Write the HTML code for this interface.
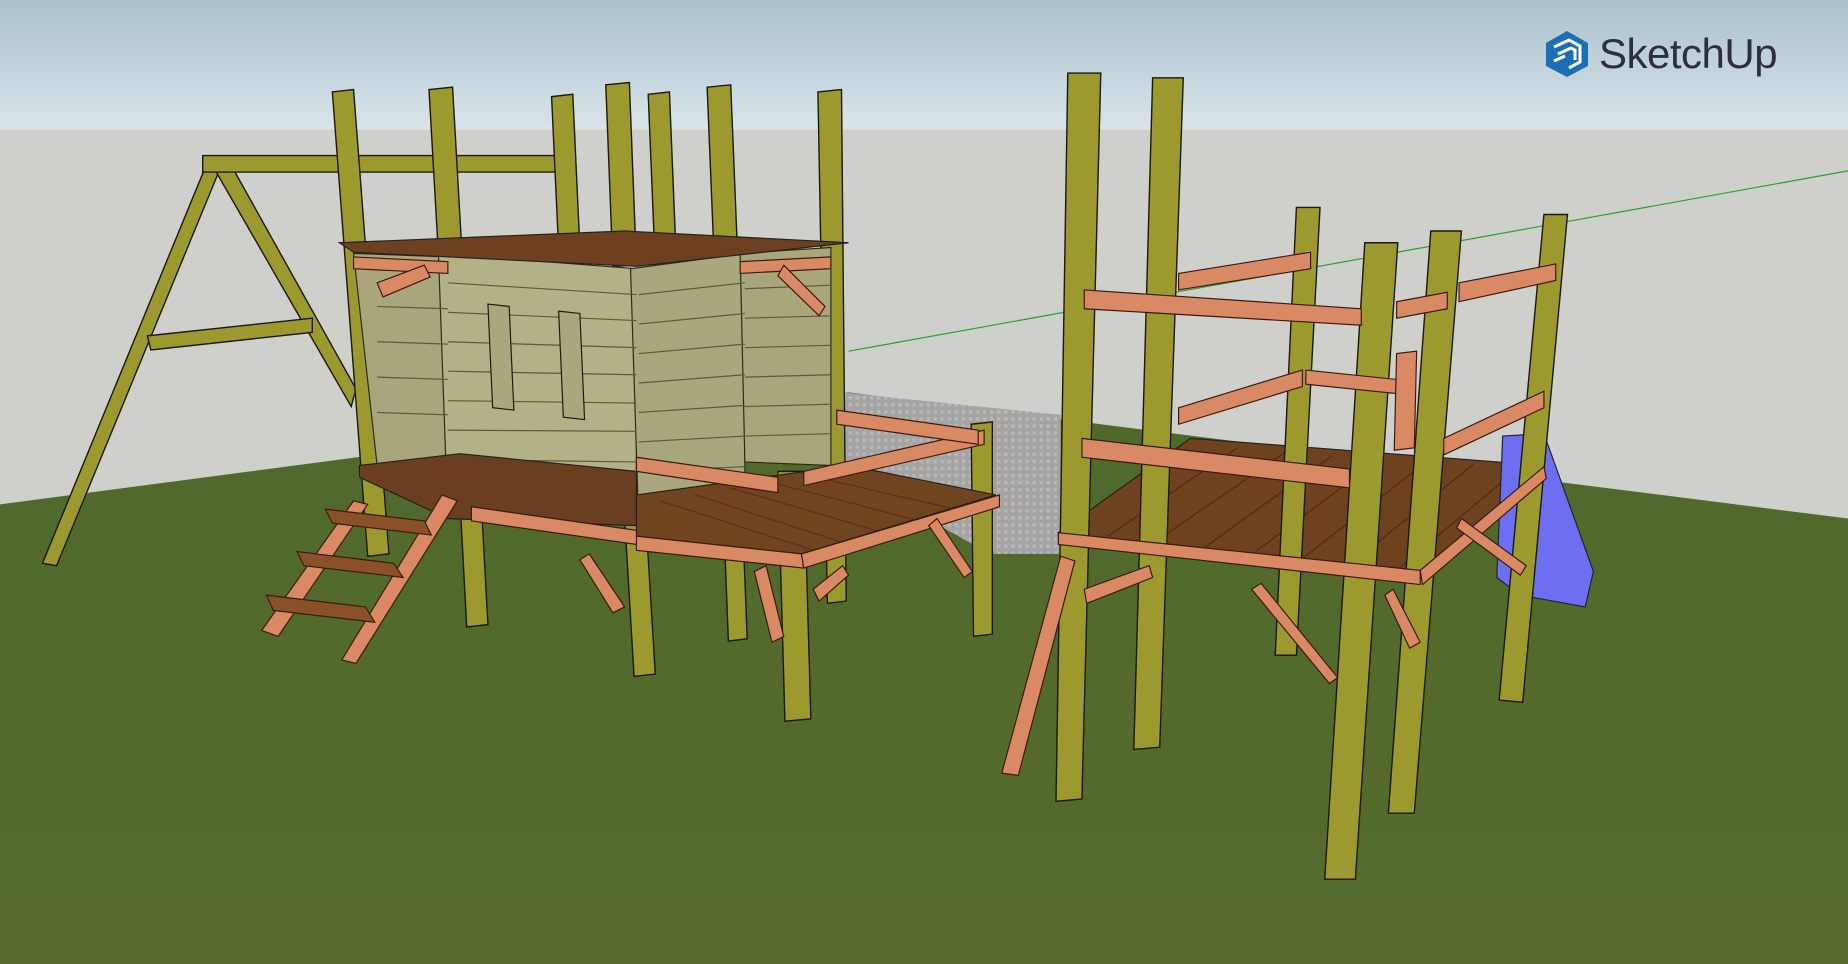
<!DOCTYPE html>
<html><head><meta charset="utf-8"><style>
html,body{margin:0;padding:0;width:1848px;height:964px;overflow:hidden;background:#5a6e2e}
svg{display:block}
.logo{position:absolute;left:1545px;top:30px;display:flex;align-items:center;gap:10px;font-family:"Liberation Sans",sans-serif;font-size:42px;color:#2f2f3c;letter-spacing:-0.5px}
</style></head><body>
<svg width="1848" height="964" viewBox="0 0 1568 818" preserveAspectRatio="none">
<defs>
<linearGradient id="sky" x1="0" y1="0" x2="0" y2="1"><stop offset="0" stop-color="#a9c1cd"/><stop offset="1" stop-color="#dbe5ea"/></linearGradient>
<linearGradient id="gr" x1="0" y1="0" x2="0" y2="1"><stop offset="0" stop-color="#50692b"/><stop offset="1" stop-color="#566a2e"/></linearGradient>
<pattern id="pav" width="6" height="6" patternUnits="userSpaceOnUse"><rect width="6" height="6" fill="#a6a3a3"/><rect width="3" height="3" fill="#b8b6b6"/></pattern>
</defs>
<rect width="1568" height="112" fill="url(#sky)"/>
<rect y="110" width="1568" height="340" fill="#cfcfcb"/>
<polygon points="0,428 720,333 1568,440 1568,818 0,818" fill="url(#gr)"/>
<polygon points="715,333 900,352 900,470 840,470 715,400" fill="url(#pav)"/>
<line x1="720" y1="298" x2="1568" y2="145" stroke="#2ca02c" stroke-width="1"/>
<g stroke="#1a1a10" stroke-width="1.2" fill="#9c9a2e">
<!-- swing A frame -->
<polygon points="36,478 175,140 188,140 48,480"/>
<polygon points="180,140 196,140 302,330 298,345"/>
<polygon points="172,132 480,132 480,146 172,146"/>
<polygon points="125,285 265,270 265,282 128,297"/>
<!-- posts left structure -->
<polygon points="282,78 300,76 330,470 312,472"/>
<polygon points="364,76 384,74 392,215 372,216"/>
<polygon points="468,82 486,80 492,210 474,211"/>
<polygon points="514,72 534,70 540,225 520,226"/>
<polygon points="550,80 568,78 574,225 556,226"/>
<polygon points="600,74 620,72 626,220 606,221"/>
<polygon points="694,78 714,76 718,510 702,512"/>
<polygon points="390,420 408,420 414,530 396,532"/>
<polygon points="530,440 548,440 556,572 538,574"/>
<polygon points="614,440 630,440 634,542 618,544"/>
<polygon points="660,400 682,400 688,610 666,612"/>
<polygon points="824,360 842,358 842,538 826,540"/>
</g>
<!-- house -->
<g stroke="#2a2a1a" stroke-width="1">
<polygon points="300,215 380,218 380,395 320,395" fill="#a8a67a"/>
<polygon points="372,215 540,228 540,446 380,440" fill="#b3b186"/>
<polygon points="535,228 632,215 632,440 542,446" fill="#a9a77c"/>
<polygon points="628,215 705,210 705,395 632,392" fill="#a8a67a"/>
</g>
<g stroke="#5a5a40" stroke-width="1">
<line x1="380" y1="240" x2="540" y2="250"/><line x1="380" y1="265" x2="540" y2="272"/><line x1="380" y1="290" x2="540" y2="295"/><line x1="380" y1="315" x2="540" y2="318"/><line x1="380" y1="340" x2="540" y2="342"/><line x1="380" y1="365" x2="540" y2="366"/><line x1="380" y1="390" x2="540" y2="392"/><line x1="380" y1="415" x2="540" y2="418"/>
<line x1="542" y1="250" x2="632" y2="240"/><line x1="542" y1="275" x2="632" y2="266"/><line x1="542" y1="300" x2="632" y2="292"/><line x1="542" y1="325" x2="632" y2="318"/><line x1="542" y1="350" x2="632" y2="344"/><line x1="542" y1="375" x2="632" y2="370"/><line x1="542" y1="400" x2="632" y2="396"/><line x1="542" y1="425" x2="632" y2="422"/>
<line x1="632" y1="245" x2="705" y2="242"/><line x1="632" y1="270" x2="705" y2="268"/><line x1="632" y1="295" x2="705" y2="293"/><line x1="632" y1="320" x2="705" y2="318"/><line x1="632" y1="345" x2="705" y2="343"/><line x1="632" y1="370" x2="705" y2="368"/>
<line x1="320" y1="260" x2="380" y2="262"/><line x1="320" y1="290" x2="380" y2="292"/><line x1="320" y1="320" x2="380" y2="322"/><line x1="320" y1="350" x2="380" y2="352"/>
</g>
<g fill="#a9a77c" stroke="#1a1a10"><polygon points="414,258 432,260 436,348 418,346"/><polygon points="474,264 492,266 496,356 478,354"/></g>
<!-- roof deck -->
<polygon points="288,206 530,196 720,206 540,226 300,214" fill="#6e4020" stroke="#222"/>
<!-- left deck and beams -->
<polygon points="305,395 390,385 540,400 540,446 380,440 305,405" fill="#6a3f20" stroke="#222"/>
<polygon points="540,420 720,395 845,420 680,470 540,455" fill="#70441f" stroke="#222"/>
<g stroke="#5a2a18" stroke-width="0.8">
<line x1="560" y1="425" x2="700" y2="470"/><line x1="590" y1="420" x2="720" y2="462"/><line x1="620" y1="414" x2="750" y2="452"/><line x1="650" y1="408" x2="780" y2="442"/><line x1="680" y1="402" x2="810" y2="432"/></g>
<g fill="#d98a64" stroke="#3a1a10" stroke-width="1">
<polygon points="540,455 680,470 682,482 540,467"/>
<polygon points="680,470 848,420 848,430 682,482"/>
<polygon points="400,430 540,450 540,462 400,442"/>
<polygon points="540,388 660,405 660,418 540,400"/>
<polygon points="682,400 835,365 835,377 682,412"/>
<polygon points="710,348 830,365 830,377 710,360"/>
<polygon points="300,218 380,222 380,232 300,228"/>
<polygon points="628,222 705,218 705,228 628,232"/>
<polygon points="320,240 360,225 365,235 325,252"/>
<polygon points="665,225 700,260 695,268 660,234"/>
<polygon points="500,470 530,515 520,520 492,475"/>
<polygon points="650,480 665,540 655,545 640,485"/>
<polygon points="795,440 825,485 818,490 788,446"/>
<polygon points="690,500 715,480 720,488 695,510"/>
<!-- stairs -->
<polygon points="222,535 300,425 312,428 236,540"/>
<polygon points="290,560 375,420 388,425 302,563"/>
<polygon points="226,505 310,515 318,528 232,518" fill="#8a5028"/>
<polygon points="252,468 334,478 342,490 258,480" fill="#8a5028"/>
<polygon points="276,432 360,442 366,454 282,444" fill="#8a5028"/>
</g>
<!-- right structure -->
<polygon points="898,452 1010,372 1310,395 1205,490" fill="#6e421f" stroke="#222"/>
<g stroke="#4a2a14" stroke-width="0.9">
<line x1="940" y1="455" x2="1050" y2="380"/><line x1="980" y1="460" x2="1090" y2="384"/><line x1="1020" y1="466" x2="1130" y2="387"/><line x1="1060" y1="472" x2="1170" y2="390"/><line x1="1100" y1="478" x2="1210" y2="392"/><line x1="1140" y1="484" x2="1250" y2="394"/><line x1="1180" y1="488" x2="1290" y2="396"/></g>
<polygon points="1275,370 1310,368 1352,485 1345,515 1290,505 1270,490" fill="#6d6ef0" stroke="#223"/>
<g stroke="#1a1a10" stroke-width="1.2" fill="#9c9a2e">
<polygon points="906,62 934,62 918,678 896,680"/>
<polygon points="978,66 1004,66 984,634 962,636"/>
<polygon points="1100,176 1120,176 1100,556 1082,556"/>
<polygon points="1158,206 1186,206 1150,746 1124,746"/>
<polygon points="1214,196 1240,196 1200,690 1178,690"/>
<polygon points="1310,182 1330,182 1292,596 1272,594"/>
</g>
<g fill="#d98a64" stroke="#3a1a10" stroke-width="1">
<polygon points="920,246 1155,262 1155,276 920,262"/>
<polygon points="1000,232 1112,214 1112,228 1000,246"/>
<polygon points="1185,256 1228,248 1228,262 1185,270"/>
<polygon points="1238,240 1320,224 1320,238 1238,256"/>
<polygon points="918,372 1145,398 1145,414 918,388"/>
<polygon points="1000,346 1105,314 1105,328 1000,360"/>
<polygon points="1108,314 1185,322 1185,334 1108,326"/>
<polygon points="1185,300 1202,298 1200,380 1183,382"/>
<polygon points="1225,372 1310,332 1310,346 1225,386"/>
<polygon points="898,452 1205,484 1205,496 898,462"/>
<polygon points="1205,484 1310,396 1312,406 1207,496"/>
<polygon points="850,656 900,472 912,476 864,658"/>
<polygon points="920,500 975,480 978,490 922,512"/>
<polygon points="1070,495 1135,575 1128,580 1062,500"/>
<polygon points="1182,500 1205,545 1196,550 1175,505"/>
<polygon points="1240,440 1295,480 1290,488 1236,448"/>
</g>
</svg>
<div class="logo"><svg width="44" height="48" viewBox="0 0 44 48"><polygon points="22,1 43,13 43,36 22,47 1,36 1,13" fill="#1c6fb4"/><path d="M9,17 L24,10 L35,16 L35,32 L24,38 M13,24 L26,18 L30,20 L30,30 M9,31 L20,26" stroke="#fff" stroke-width="3" fill="none"/></svg><span>SketchUp</span></div>
</body></html>
